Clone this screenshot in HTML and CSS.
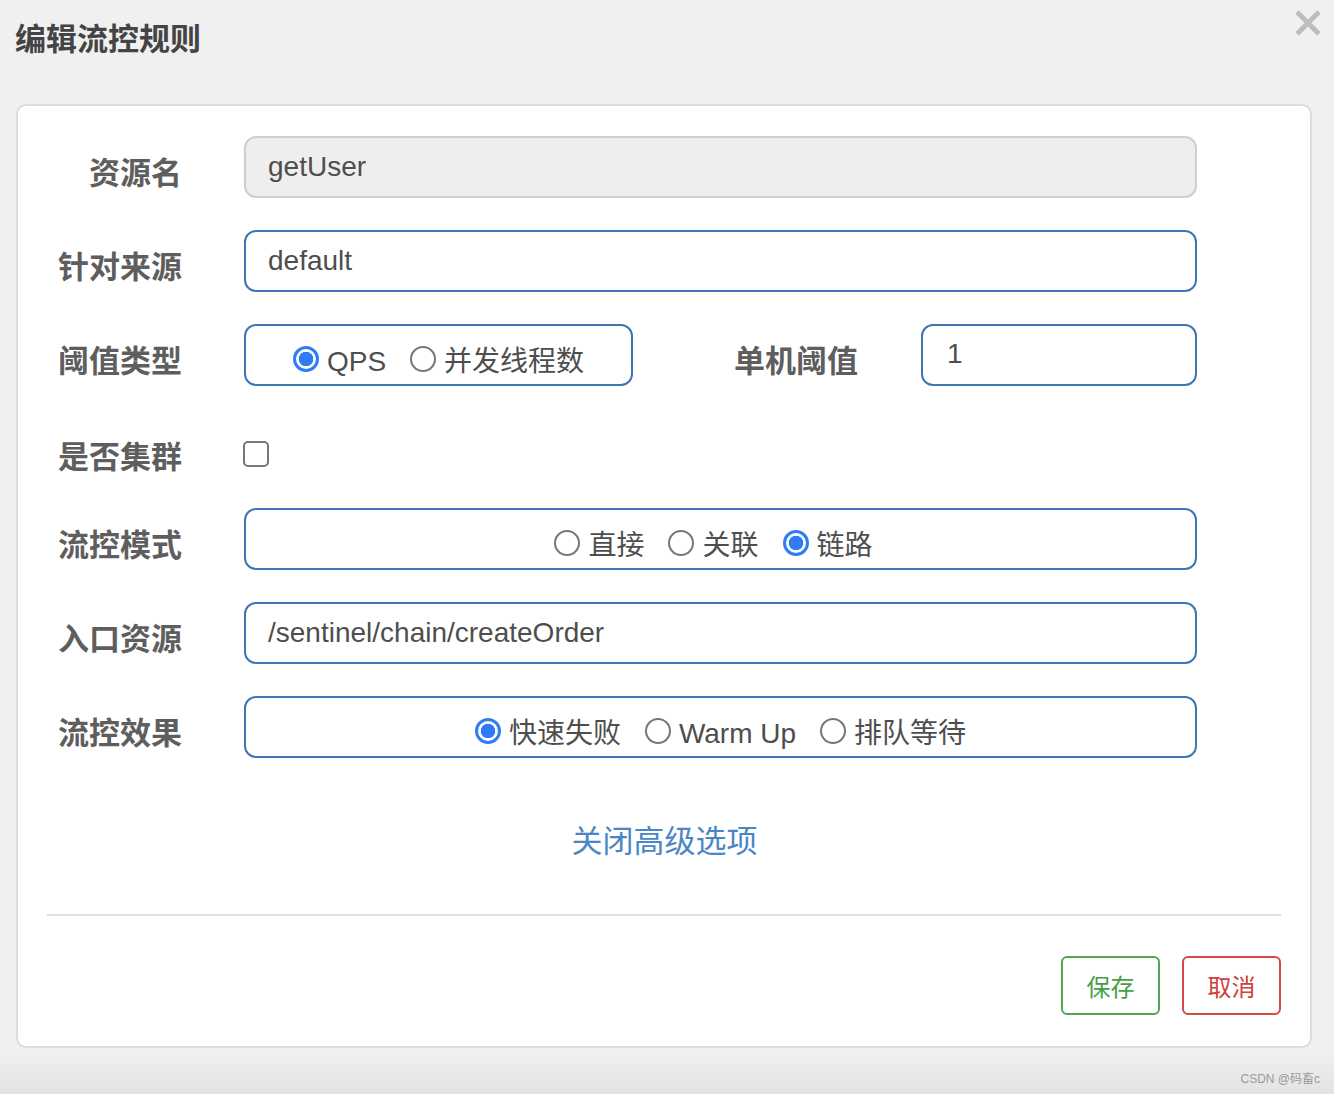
FILE: index.html
```html
<!DOCTYPE html>
<html lang="zh">
<head>
<meta charset="utf-8">
<title>编辑流控规则</title>
<link rel="stylesheet" href="styles.css">
</head>
<body>
<div class="page">
  <header class="head">
    <h1 class="title">编辑流控规则</h1>
    <svg class="close" width="28" height="26" viewBox="0 0 28 26"><path d="M3 2 L25 24 M25 2 L3 24" stroke="#bdbdbd" stroke-width="5" stroke-linecap="butt"/></svg>
  </header>
  <main class="card">
    <div class="form">
      <div class="row">
        <div class="label">资源名</div>
        <div class="input disabled">getUser</div>
      </div>
      <div class="row">
        <div class="label">针对来源</div>
        <div class="input">default</div>
      </div>
      <div class="row">
        <div class="label">阈值类型</div>
        <div class="split">
          <div class="box small">
            <span class="radio on"></span><span class="rtext">QPS</span>
            <span class="radio"></span><span class="rtext">并发线程数</span>
          </div>
          <div class="label mid">单机阈值</div>
          <div class="input num">1</div>
        </div>
      </div>
      <div class="row check-row">
        <div class="label">是否集群</div>
        <span class="checkbox"></span>
      </div>
      <div class="row">
        <div class="label">流控模式</div>
        <div class="box wide shift">
          <span class="radio"></span><span class="rtext">直接</span>
          <span class="radio"></span><span class="rtext">关联</span>
          <span class="radio on"></span><span class="rtext">链路</span>
        </div>
      </div>
      <div class="row">
        <div class="label">入口资源</div>
        <div class="input">/sentinel/chain/createOrder</div>
      </div>
      <div class="row">
        <div class="label">流控效果</div>
        <div class="box wide">
          <span class="radio on"></span><span class="rtext">快速失败</span>
          <span class="radio"></span><span class="rtext">Warm Up</span>
          <span class="radio"></span><span class="rtext">排队等待</span>
        </div>
      </div>
      <div class="link-row"><span class="link">关闭高级选项</span></div>
    </div>
    <div class="footer">
      <span class="btn save">保存</span>
      <span class="btn cancel">取消</span>
    </div>
  </main>
  <div class="watermark">CSDN @码畜c</div>
</div>
</body>
</html>
```
FILE: styles.css
```css
* { box-sizing: border-box; }
html, body { margin: 0; padding: 0; }
body {
  font-family: "Liberation Sans", "Noto Sans CJK SC", sans-serif;
  width: 1334px;
  height: 1094px;
  overflow: hidden;
}
.page {
  position: relative;
  width: 1334px;
  height: 1094px;
  background: linear-gradient(to bottom, #f0f0f0 0, #f0f0f0 1050px, #e3e3e3 1094px);
  padding: 0 22px 0 16px;
}
.head {
  height: 104px;
  display: flex;
  justify-content: space-between;
  align-items: flex-start;
}
.title {
  margin: 22px 0 0 -1px;
  font-size: 31px;
  line-height: 36px;
  font-weight: bold;
  color: #444;
}
.close { margin-top: 10px; margin-right: -10px; }
.card {
  width: 1296px;
  height: 944px;
  background: #fff;
  border: 2px solid #dcdcdc;
  border-radius: 10px;
  padding: 30px 29px 0 0;
}
.form { display: flex; flex-direction: column; gap: 32px; }
.row { display: flex; align-items: center; height: 62px; }
.label {
  width: 164px;
  margin-right: 62px;
  text-align: right;
  font-size: 31px;
  font-weight: bold;
  color: #5e5e5e;
  padding-top: 6px;
}
.input {
  width: 953px;
  height: 62px;
  border: 2px solid #3d76b1;
  border-radius: 12px;
  padding: 0 22px;
  font-size: 28px;
  line-height: 58px;
  color: #4e4e4e;
}
.input.disabled { background: #eeeeee; border-color: #cfcfcf; }
.split { display: flex; align-items: center; width: 953px; }
.box {
  height: 62px;
  border: 2px solid #3d76b1;
  border-radius: 12px;
  display: flex;
  align-items: center;
  justify-content: center;
  padding-top: 14px;
}
.box.small { width: 389px; }
.box.wide { width: 953px; }
.box.shift { padding-right: 14px; }
.label.mid { width: 225px; margin-right: 63px; padding-top: 6px; }
.input.num { width: 276px; padding-left: 24px; line-height: 56px; }
.radio {
  width: 26px;
  height: 26px;
  border-radius: 50%;
  border: 2px solid #767676;
  background: #fff;
  margin-right: 8px;
  margin-top: -6px;
  flex: none;
}
.radio.on {
  border: 3px solid #2f7cf6;
  background: radial-gradient(circle, #2f7cf6 0, #2f7cf6 7px, #fff 7.5px);
}
.rtext {
  font-size: 28px;
  color: #4e4e4e;
  margin-right: 24px;
  line-height: 40px;
}
.rtext:last-child { margin-right: 0; }
.check-row { height: 58px; padding-top: 14px; }
.check-row .label { padding-top: 0; }
.checkbox {
  width: 26px;
  height: 26px;
  border: 2.5px solid #777;
  border-radius: 5px;
  margin-left: -1px;
}
.link-row {
  text-align: center;
  margin-top: 32px;
  padding-left: 30px;
}
.link {
  font-size: 31px;
  line-height: 40px;
  color: #4a86c6;
}
.footer {
  margin: 52px 0 0 29px;
  border-top: 2px solid #e0e0e0;
  display: flex;
  justify-content: flex-end;
  gap: 22px;
  padding-top: 40px;
}
.btn {
  width: 99px;
  height: 59px;
  border: 2px solid;
  border-radius: 6px;
  font-size: 24px;
  display: flex;
  align-items: center;
  justify-content: center;
  background: #fff;
}
.btn.save { border-color: #53a653; color: #45a045; }
.btn.cancel { border-color: #d44a47; color: #cf3f3c; }
.watermark {
  position: absolute;
  right: 14px;
  bottom: 8px;
  font-size: 12px;
  color: #9a9a9a;
}
```
